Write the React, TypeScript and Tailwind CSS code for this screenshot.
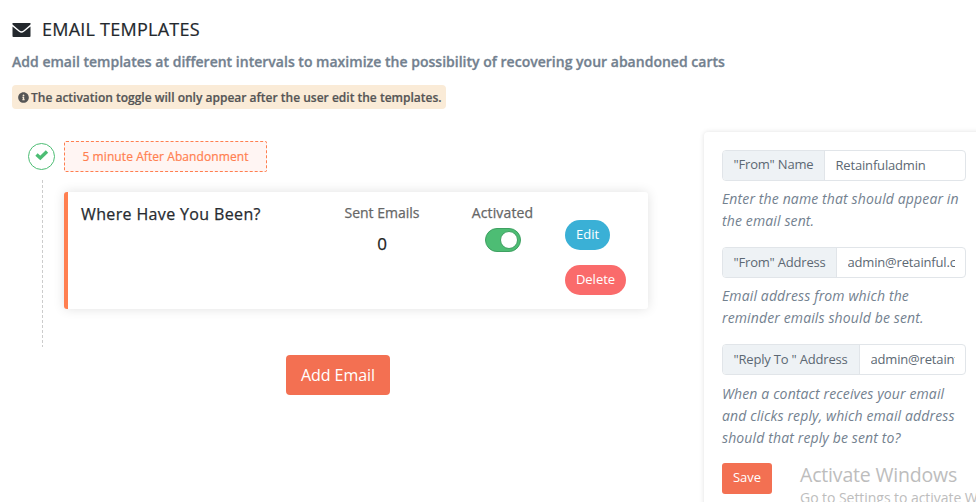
import { FaInfoCircle } from "react-icons/fa";

function TemplateCard() {
  return (
    <div className="flex h-[117px] w-[584px] rounded-[3px] border-l-4 border-[#ff7f50] bg-white shadow-[0_0_12px_rgba(0,0,0,0.12)]">
      <h4 className="w-[244px] shrink-0 pl-[13px] pt-[10px] text-[16px] font-medium leading-6 tracking-[0.36px] text-[#272b30] [-webkit-text-stroke:0.25px]">
        Where Have You Been?
      </h4>
      <div className="flex w-[140px] shrink-0 flex-col items-center pt-[10px]">
        <span className="text-[14px] font-medium leading-[22px] text-[#666] [-webkit-text-stroke:0.25px]">Sent Emails</span>
        <span className="mt-[8px] text-[17px] font-medium leading-6 text-[#222] [-webkit-text-stroke:0.25px]">0</span>
      </div>
      <div className="flex w-[101px] shrink-0 flex-col items-center pt-[10px]">
        <span className="text-[14px] font-medium leading-[22px] tracking-[0.15px] text-[#666] [-webkit-text-stroke:0.25px]">Activated</span>
        <span className="mt-[4px] flex h-6 w-9 items-center justify-end rounded-full border border-[#3fa062] bg-[#4dbd74] pr-[2px]">
          <span className="h-[18px] w-[18px] rounded-full border border-[#3fa062] bg-white" />
        </span>
      </div>
      <div className="flex flex-col items-start gap-[15px] pl-[12px] pt-[28px] text-[13px] text-white">
        <button className="h-[30px] w-[45px] rounded-full bg-[#3ab0d6] pb-px">Edit</button>
        <button className="h-[30px] w-[61px] rounded-full bg-[#fa6b6b] pb-px">Delete</button>
      </div>
    </div>
  );
}

type FieldProps = { label: string; value: string; hint: string; labelClass: string; fieldClass: string };

function Field({ label, value, hint, labelClass, fieldClass }: FieldProps) {
  return (
    <div className={fieldClass}>
      <div className="flex h-[31px] w-[244px] overflow-hidden rounded-[4px] border border-[#e1e5e9] text-[13px] text-[#5c6873]">
        <span className={`shrink-0 whitespace-nowrap border-r border-[#e1e5e9] bg-[#eef2f5] pl-[10.5px] tracking-[-0.19px] ${labelClass}`}>
          {label}
        </span>
        <span className="ml-[10.5px] mr-[10px] min-w-0 flex-1 overflow-hidden whitespace-nowrap leading-[29px] tracking-[-0.17px]">{value}</span>
      </div>
      <p className="mt-[7px] whitespace-pre text-[14px] italic leading-[22px] tracking-[0.13px] text-[#73818f]">{hint}</p>
    </div>
  );
}

export default function App() {
  return (
    <div className="relative flex h-[502px] w-[976px] flex-col overflow-hidden bg-white font-['Open_Sans','Noto_Sans',sans-serif]">
      <header className="flex h-[132px] shrink-0 flex-col items-start pl-3">
        <h1 className="mt-[15px] flex h-[28px] items-center text-[18px] font-medium tracking-[0.24px] text-[#23282d] [-webkit-text-stroke:0.2px]">
          <svg width="19" height="14" viewBox="0 0 19 14" className="mr-[11px] mt-[2px]">
            <path d="M0.5 0H18.5V1.5L11.5 7.5Q9.5 9 7.5 7.5L0.5 1.5Z" fill="#23282d" />
            <path d="M0.5 3.5L7 8.8Q9.5 10.8 12 8.8L18.5 3.5V13.2Q18.5 14 17.5 14H1.5Q0.5 14 0.5 13.2Z" fill="#23282d" />
          </svg>
          EMAIL TEMPLATES
        </h1>
        <p className="mt-[8px] whitespace-nowrap text-[14px] font-semibold leading-[22px] tracking-[0.014px] text-[#73818f] [-webkit-text-stroke:0.3px]">
          Add email templates at different intervals to maximize the possibility of recovering your abandoned carts
        </p>
        <div className="mt-[12px] flex h-6 w-[434px] items-center rounded-[4px] bg-[#faebd7] pl-[6px] text-[12px] font-semibold text-[#555] [-webkit-text-stroke:0.2px]">
          <FaInfoCircle className="mr-[2px] mt-px h-[11px] w-[11px] shrink-0" />
          <span className="whitespace-nowrap pt-px">The activation toggle will only appear after the user edit the templates.</span>
        </div>
      </header>
      <main className="flex min-h-0 flex-1">
        <section className="flex w-[704px] shrink-0">
          <div className="flex w-16 flex-col pl-7 pt-[11px]">
            <span className="flex h-[27px] w-[27px] items-center justify-center rounded-full border border-[#4dbd74]">
              <svg width="14" height="12" viewBox="0 0 14 12" className="mb-[4px]">
                <path d="M1.5 5.5L5.3 9L12 2.5" fill="none" stroke="#4dbd74" strokeWidth="3.4" />
              </svg>
            </span>
            <span className="ml-[14px] mt-[10px] h-[167px] w-px bg-[repeating-linear-gradient(to_bottom,#ccc_0_3px,transparent_3px_5px)]" />
          </div>
          <div className="pt-[9px]">
            <div className="mb-5 h-[31px] w-[203px] rounded-[2px] border border-dashed border-[#ff7f50] bg-[#fff5f3] text-center text-[12px] leading-[29px] tracking-[0.08px] text-[#ff7f50] [-webkit-text-stroke:0.2px]">
              5 minute After Abandonment
            </div>
            <TemplateCard />
            <button className="ml-[222px] mt-[46px] h-10 w-[104px] rounded-[4px] bg-[#f37052] text-[16px] tracking-[-0.05px] text-white">Add Email</button>
          </div>
        </section>
        <aside className="h-[420px] w-[290px] shrink-0 rounded-[4px] bg-white pl-[18px] pt-[18px] shadow-[0_0_5px_rgba(0,0,0,0.12)]">
          <Field label={'"From" Name'} value="Retainfuladmin" hint={"Enter the name that should appear in\nthe email sent."} labelClass="w-[102px] leading-[27px]" fieldClass="h-[97px]" />
          <Field label={'"From" Address'} value="admin@retainful.com" hint={"Email address from which the\nreminder emails should be sent."} labelClass="w-[114px] leading-[29px]" fieldClass="h-[97px]" />
          <Field label={'"Reply To " Address'} value="admin@retainful.com" hint={"When a contact receives your email\nand clicks reply, which email address\nshould that reply be sent to?"} labelClass="w-[137px] leading-[29px]" fieldClass="h-[119px] [&>p]:mt-[8px]" />
          <button className="h-[31px] w-[50px] rounded-[3px] bg-[#f37052] pb-[2px] text-[13px] text-white">Save</button>
        </aside>
      </main>
      <div className="absolute left-[800px] top-[462px] whitespace-nowrap text-[#bdbdbd]">
        <div className="text-[19.5px] leading-[26px] tracking-[-0.18px]">Activate Windows</div>
        <div className="text-[14px] leading-5 tracking-[-0.05px]">Go to Settings to activate Windows.</div>
      </div>
    </div>
  );
}
